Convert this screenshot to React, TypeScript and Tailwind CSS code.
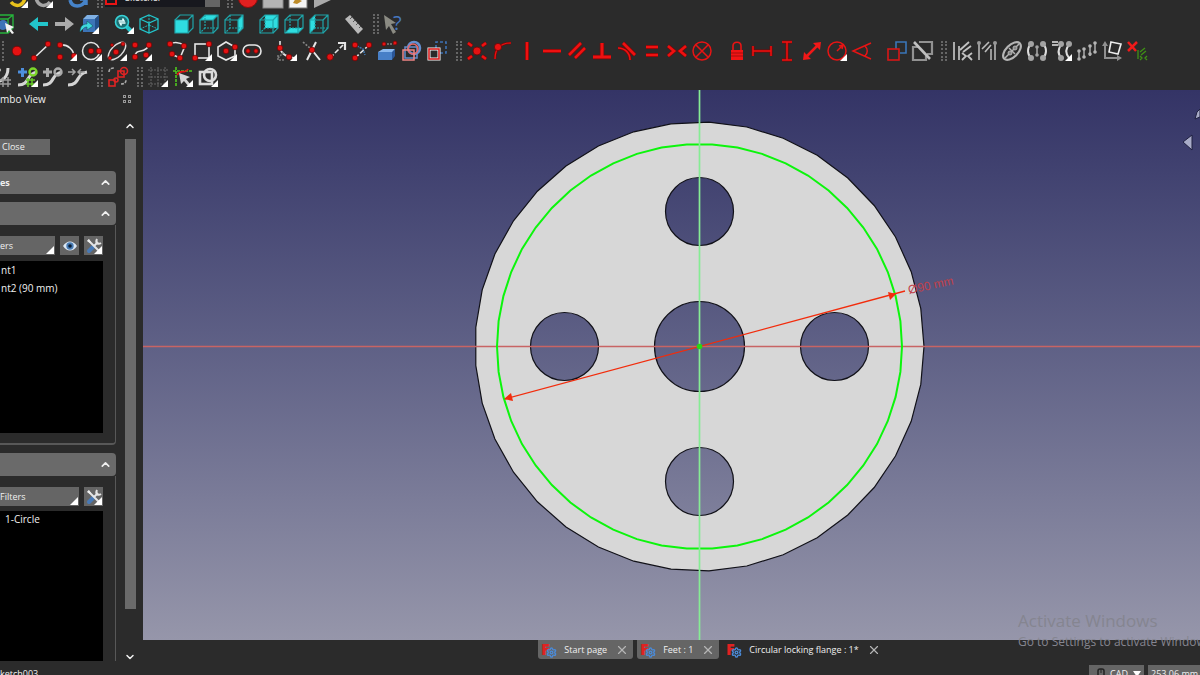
import React, { useState } from 'react'
import { ChevronDown, ChevronUp, Settings, X } from 'lucide-react'

interface Tool {
  label: string
  icon: React.ReactNode
  menu?: boolean
}

const RED = '#e81414'
const TEAL = '#22c5cb'

function Dot({ x, y, r = 2.8 }: { x: number; y: number; r?: number }) {
  return <circle cx={x} cy={y} r={r} fill="#e51212" stroke="#6d0505" strokeWidth="0.8" />
}

function Line({ d, color = '#e6e6e6', width = 1.6, dash }: { d: string; color?: string; width?: number; dash?: string }) {
  return <path d={d} fill="none" stroke={color} strokeWidth={width} strokeDasharray={dash} />
}

// Red constraint stroke with a dark outline
function Bar({ d, width = 2.6 }: { d: string; width?: number }) {
  return (
    <g fill="none">
      <path d={d} stroke="#7a0606" strokeWidth={width + 1.4} />
      <path d={d} stroke="#ee1111" strokeWidth={width} />
    </g>
  )
}

const faces = {
  front: '1,6 14,6 14,19 1,19',
  top: '1,6 6,1 19,1 14,6',
  right: '14,6 19,1 19,14 14,19',
  rear: '6,1 19,1 19,14 6,14',
  bottom: '1,19 6,14 19,14 14,19',
  left: '1,6 6,1 6,14 1,19'
}

function CubeView({ face }: { face: keyof typeof faces }) {
  return (
    <g>
      <polygon points={faces[face]} fill="#2fdde0" />
      <g fill="none" stroke="#1fa5aa" strokeWidth="1.2">
        <polygon points={faces.front} />
        <path d="M1 6 6 1H19V14L14 19M14 6 19 1" />
        {face !== 'front' && <path d="M6 1V14H19M6 14 1 19" strokeDasharray="2 1" />}
      </g>
    </g>
  )
}

function Curve({ plus, color }: { plus?: boolean; color?: string }) {
  return (
    <g>
      <Line d="M0 18C13 18 7 7 19 5" width={3.2} color="#d4d4d4" />
      {plus && <Line d="M0 5H9M4.500 1V10" width={3} color={color || '#aaa'} />}
      {plus && <circle cx="15" cy="5" r="3.5" fill="none" stroke={color ? '#7cd62a' : '#aaa'} strokeWidth="2.4" />}
    </g>
  )
}

// Isometric cube with its hidden edges
function Cube() {
  return (
    <g fill="none" stroke={TEAL} strokeWidth="1.3">
      <path d="M10 1 19 5V15L10 19 1 15V5ZM1 5 10 9 19 5M10 9V19" />
      <path d="M10 1V11L1 15M10 11 19 15" strokeWidth="0.9" strokeDasharray="2 1" />
    </g>
  )
}

const fileTools: Tool[] = [
  { label: 'Undo', menu: true, icon: <Line d="M3 14C8 20 16 18 17 9" color="#e8c21c" width={3.5} /> },
  { label: 'Redo', menu: true, icon: <Line d="M17 14C12 20 4 18 3 9" color="#a5a5a5" width={3.5} /> }
]

const macroTools: Tool[] = [
  { label: 'Record macro', icon: <circle cx="10" cy="10" r="9.5" fill="#e22020" stroke="#8e0c0c" /> },
  { label: 'Stop macro', icon: <rect x="0" y="0" width="20" height="20" fill="#b4b4b4" stroke="#888" /> },
  {
    label: 'Macros',
    icon: (
      <g>
        <rect x="1" y="0" width="18" height="20" fill="#f4f4f4" stroke="#777" />
        <path d="M5 15 8 10 14 13 9 16Z" fill="#bd8b28" />
      </g>
    )
  },
  { label: 'Execute macro', icon: <path d="M1 0 20 11 1 20Z" fill="#aaa" /> }
]

const viewTools: Tool[][] = [
  [
    {
      label: 'Fit selection',
      icon: (
        <g>
          <path d="M1 5 6 1H19V14L14 19H1Z M1 5H14V19M14 5 19 1" fill="none" stroke="#27b43c" strokeWidth="1.4" />
          <circle cx="9" cy="11" r="5" fill="#3c73b8" />
          <path d="M11 9 20 13 17 15 20 19 18 20 15 16 13 19Z" fill="#f2f2f2" />
        </g>
      )
    }
  ],
  [
    { label: 'Back', icon: <path d="M0 10 9 3V8H19V12H9V17Z" fill={TEAL} /> },
    { label: 'Forward', icon: <path d="M20 10 11 3V8H1V12H11V17Z" fill="#ababab" /> },
    {
      label: 'Go to linked object',
      menu: true,
      icon: (
        <g>
          <path d="M4 5 8 1H20L16 5Z" fill="#7fb0e4" />
          <path d="M4 5H16V18H4Z" fill="#3c74b8" />
          <path d="M16 5 20 1V14L16 18Z" fill="#24508c" />
          <path d="M1 18C1 12 4 10 8 10V7L14 12 8 16V13C5 13 4 15 1 18Z" fill="#3fd8dd" stroke="#0f5b60" strokeWidth="0.6" />
        </g>
      )
    }
  ],
  [
    {
      label: 'Fit all',
      menu: true,
      icon: (
        <g>
          <path d="M12 12 18 18" stroke={TEAL} strokeWidth="4" />
          <circle cx="8" cy="8" r="6.5" fill="#1d6f73" stroke="#38d2d7" strokeWidth="1.6" />
          <path d="M4.500 7H10L8.500 4.500M11.500 9H6L7.500 11.500" fill="none" stroke="#e5ffff" strokeWidth="1.5" />
        </g>
      )
    },
    { label: 'Isometric', icon: <Cube /> }
  ],
  [
    { label: 'Front view', icon: <CubeView face="front" /> },
    { label: 'Top view', icon: <CubeView face="top" /> },
    { label: 'Right view', icon: <CubeView face="right" /> }
  ],
  [
    { label: 'Rear view', icon: <CubeView face="rear" /> },
    { label: 'Bottom view', icon: <CubeView face="bottom" /> },
    { label: 'Left view', icon: <CubeView face="left" /> }
  ],
  [
    {
      label: 'Measure',
      icon: (
        <g>
          <path d="M1 5 6 1 19 15 14 20Z" fill="#b9b9b9" />
          <path d="M8 3 6 5M11 6 9 8M14 9 12 11M17 12 15 14" stroke="#555" strokeWidth="1" />
        </g>
      )
    }
  ]
]

const geometryTools: Tool[][] = [
  [
    { label: 'Point', icon: <Dot x={10} y={10} r={4.8} /> },
    { label: 'Line', icon: <g><Line d="M2 17 17 3" /><Dot x={2} y={17} /><Dot x={16} y={3} /></g> },
    { label: 'Arc', menu: true, icon: <g><Line d="M3 4C11 3 17 9 17 16" /><Dot x={3} y={4} /><Dot x={3} y={16} /><Dot x={17} y={15} /></g> },
    { label: 'Circle', menu: true, icon: <g><circle cx="9" cy="10" r="8.5" fill="none" stroke="#e6e6e6" strokeWidth="1.5" /><Dot x={9} y={10} /><Dot x={17} y={10} /></g> },
    {
      label: 'Ellipse',
      menu: true,
      icon: (
        <g>
          <ellipse cx="10" cy="10" rx="11" ry="5.5" transform="rotate(-45 10 10)" fill="none" stroke="#ddd" strokeWidth="1.4" />
          <Dot x={9} y={11} /><Dot x={16} y={3} r={2} /><Dot x={5} y={4} r={1.5} /><Dot x={3} y={17} r={1.8} />
        </g>
      )
    },
    { label: 'B-spline', menu: true, icon: <g><Line d="M3 16C3 6 13 14 17 4" /><Dot x={3} y={4} /><Dot x={3} y={16} /><Dot x={17} y={4} /><Dot x={14} y={14} /></g> }
  ],
  [
    { label: 'Polyline', icon: <g><Line d="M3 3C9 0 14 2 18 5L13 17 4 13" /><Dot x={3} y={3} /><Dot x={17} y={5} /><Dot x={5} y={13} /><Dot x={13} y={17} /></g> },
    { label: 'Rectangle', menu: true, icon: <g><rect x="3" y="3" width="14" height="14" fill="none" stroke="#e6e6e6" strokeWidth="1.6" /><Dot x={17} y={3} /><Dot x={3} y={17} /></g> },
    { label: 'Polygon', menu: true, icon: <g><path d="M9 1 18 6V15L9 19 1 15V6Z" fill="none" stroke="#e6e6e6" strokeWidth="1.6" /><Dot x={9} y={10} /><Dot x={18} y={6} /></g> },
    { label: 'Slot', icon: <g><rect x="1" y="4" width="18" height="12" rx="6" fill="none" stroke="#e6e6e6" strokeWidth="1.6" /><Dot x={6} y={10} r={2.2} /><Dot x={14} y={10} r={2.2} /></g> }
  ],
  [
    { label: 'Fillet', menu: true, icon: <g><Line d="M3 0V7C4 12 9 16 18 17" /><Line d="M1 17 7 11M1 14V19H8" color="#777" dash="2 1" /><Dot x={3} y={7} /><Dot x={12} y={16} /></g> },
    { label: 'Trim', icon: <g><Line d="M14 1 5 19M10 9 18 19" width={2} /><Line d="M1 1 9 8" color="#888" dash="2 1.500" /><Dot x={10} y={9} /></g> },
    { label: 'Extend', icon: <g><Line d="M3 17 16 4" dash="5 2" /><Line d="M11 2H18V9" width={2.2} /><Dot x={3} y={16} r={3.2} /></g> },
    { label: 'Split', icon: <g><Line d="M3 17 17 4" dash="5 2" /><Line d="M5 5 11 8 13 14" color="#3e75ae" dash="2 1" /><Dot x={3} y={4} /><Dot x={17} y={4} /><Dot x={3} y={17} /></g> },
    {
      label: 'External geometry',
      icon: (
        <g>
          <path d="M1 11 6 8H18L16 11Z" fill="#8bb9ee" />
          <path d="M1 11H15V19H1Z" fill="#477fc7" />
          <path d="M15 11 18 8V15L15 19Z" fill="#2a5698" />
          <Line d="M7 3H19" color="#aaa" width={1} dash="2 1" /><Dot x={7} y={3} r={2} /><Dot x={18} y={2} r={2} />
        </g>
      )
    },
    {
      label: 'Carbon copy',
      icon: (
        <g fill="none" strokeWidth="1.5">
          <circle cx="12" cy="7" r="6" stroke="#648fd0" strokeWidth="2.5" />
          <rect x="3" y="6" width="12" height="11" stroke="#648fd0" />
          <circle cx="11" cy="8" r="5" stroke="#e86666" />
          <rect x="1" y="9" width="11" height="10" stroke="#f08585" />
        </g>
      )
    },
    {
      label: 'Toggle construction',
      icon: (
        <g fill="none">
          <path d="M9 7V1H19V12H13" stroke="#3e72b4" strokeWidth="1.6" strokeDasharray="3 2" />
          <rect x="2" y="8" width="10" height="10" stroke="#fff" strokeWidth="3" />
          <rect x="2" y="8" width="10" height="10" stroke="#d92020" strokeWidth="1.6" />
        </g>
      )
    }
  ]
]

const constraintTools: Tool[][] = [
  [
    { label: 'Coincident', icon: <g><Bar d="M1 2 5 5M19 2 15 5M1 18 5 15M19 18 15 15" /><Dot x={10} y={10} r={4} /></g> },
    { label: 'Point on object', icon: <g><Bar d="M3 18C3 8 8 2 19 2" width={1.2} /><Dot x={6} y={6} r={3.6} /></g> },
    { label: 'Vertical', icon: <Bar d="M10 1V19" /> },
    { label: 'Horizontal', icon: <Bar d="M1 10H19" /> },
    { label: 'Parallel', icon: <Bar d="M2 14 14 2M8 17 18 7" /> },
    { label: 'Perpendicular', icon: <Bar d="M10 2V16M1 16H19" width={3} /> },
    { label: 'Tangent', icon: <g><Bar d="M6 2 18 14" /><Bar d="M1 7C8 7 13 12 13 19" width={1.6} /></g> },
    { label: 'Equal', icon: <Bar d="M4 6H16M4 14H16" /> },
    { label: 'Symmetric', icon: <Bar d="M1 5 7 10 1 15M19 5 13 10 19 15" /> },
    { label: 'Block', icon: <g fill="none" stroke={RED} strokeWidth="1.5"><circle cx="10" cy="10" r="9" /><path d="M4 4 16 16M16 4 4 16" /></g> }
  ],
  [
    { label: 'Lock', icon: <g><path d="M6 10V5C6 0 14 0 14 5V10" fill="none" stroke={RED} strokeWidth="1.6" /><path d="M4 9H16V19H4Z" fill="#f01414" /><path d="M4 12H16M4 15H16" stroke="#a70d0d" /></g> },
    { label: 'Horizontal distance', icon: <Bar d="M1 5V15M19 5V15M1 10H19" width={1.5} /> },
    { label: 'Vertical distance', icon: <Bar d="M5 1H15M5 19H15M10 1V19" width={1.5} /> },
    { label: 'Distance', icon: <g fill="#f01818"><path d="M5 15 15 5" stroke="#f01818" strokeWidth="2.5" /><path d="M19 1 18 9 11 2ZM1 19 2 11 9 18Z" /></g> },
    { label: 'Radius', menu: true, icon: <g fill="none" stroke={RED} strokeWidth="1.5"><circle cx="10" cy="10" r="9" /><path d="M10 10 16 4M15 8 16 4 12 5" /></g> },
    { label: 'Angle', icon: <g fill="none" stroke={RED} strokeWidth="1.5"><path d="M19 2 1 10 19 18M13 5C16 8 16 12 13 15" /></g> }
  ],
  [
    { label: 'Toggle driving', icon: <g fill="none" strokeWidth="1.6"><path d="M9 8V1H19V12H13" stroke="#3a76b8" /><rect x="1" y="8" width="11" height="11" stroke="#d81717" /></g> },
    { label: 'Toggle active', icon: <g fill="none" stroke="#929292" strokeWidth="2.2"><path d="M7 1H20V13H15M6 6H1V19H14V15" /><path d="M2 1 18 18" stroke="#c0c0c0" strokeWidth="2.6" /></g> }
  ]
]

const inspectTools: Tool[] = [
  { label: 'Select constraints', icon: <g><Line d="M2 1V19M7 5V19" color="#aaa" width={2} /><Line d="M8 9 17 1M11 11 19 5M10 12 14 15 10 19M20 12 16 15 20 19" color="#c2c2c2" width={1.8} /></g> },
  { label: 'Select elements', icon: <g><Line d="M2 1V19M18 1V19M14 8V19" color="#999" width={2} /><Line d="M5 8 12 1M8 11 14 4" color="#bbb" /><circle cx="2" cy="2" r="2" fill="#999" /><circle cx="18" cy="2" r="2" fill="#999" /></g> },
  { label: 'Show internal geometry', icon: <g fill="none" stroke="#b5b5b5"><ellipse cx="10" cy="10" rx="11" ry="6" transform="rotate(-45 10 10)" strokeWidth="2.2" /><path d="M3 17 17 3M7 7 13 13" strokeWidth="1.5" /><circle cx="8" cy="12" r="2" fill="#888" /><circle cx="13" cy="7" r="2" fill="#888" /></g> },
  { label: 'Symmetry', icon: <g fill="#a2a2a2"><Line d="M4 3C0 7 0 13 4 17M16 3C20 7 20 13 16 17" width={2} color="#ddd" /><Line d="M10 5V15" color="#a2a2a2" /><circle cx="4" cy="3" r="3" /><circle cx="16" cy="3" r="3" /><circle cx="4" cy="17" r="3" /><circle cx="16" cy="17" r="3" /><circle cx="10" cy="6" r="1.8" /><circle cx="10" cy="14" r="1.8" /></g> },
  { label: 'Clone', menu: true, icon: <g fill="#a2a2a2"><Line d="M0 1H6M0 4H6" /><Line d="M9 4C6 8 6 13 9 17M17 4C13 8 14 13 17 17" width={2} color="#ddd" /><circle cx="9" cy="3" r="3" /><circle cx="17" cy="3" r="3" /><circle cx="9" cy="17" r="3" /></g> },
  { label: 'Rectangular array', icon: <g fill="#b5b5b5"><Line d="M2 9V19M7 7V17M13 4V15M18 2V12" color="#a5a5a5" /><circle cx="2" cy="10" r="1.8" /><circle cx="2" cy="18" r="1.8" /><circle cx="7" cy="8" r="1.8" /><circle cx="7" cy="16" r="1.8" /><circle cx="13" cy="5" r="1.8" /><circle cx="13" cy="13" r="1.8" /><circle cx="18" cy="2" r="1.8" /><circle cx="18" cy="11" r="1.8" /></g> },
  { label: 'Remove axes alignment', icon: <g><Line d="M3 2V17H18" color="#909090" width={2} /><path d="M0 5 3 0 6 5ZM15 14 20 17 15 20Z" fill="#909090" /><path d="M9 1 19 3 16 13 7 11Z" fill="none" stroke="#ededed" strokeWidth="1.6" /></g> },
  { label: 'Delete all constraints', icon: <g><Line d="M1 1 9 10M10 1 1 10" color="#f01a1a" width={2.5} /><Line d="M11 9V18M13 11 18 7M14 14 19 10M13 15 15 17 13 19M20 15 18 17 20 19" color="#3f9215" width={1.3} /></g> }
]

const splineTools: Tool[] = [
  { label: 'Decrease degree', icon: <g><Line d="M0 15C8 15 15 11 15 1" width={3} color="#d4d4d4" /><Line d="M0 3H8" color="#aaa" width={2.5} /><Line d="M7 13H18M7 17H18M10 10V20M15 10V20" color="#999" width={1.5} /></g> },
  { label: 'Increase knot multiplicity', menu: true, icon: <g><Curve plus color="#4d8edb" /><Line d="M8 13H17M8 17H17M10 11V20M14 11V20" color="#66c925" width={1.5} /></g> },
  { label: 'Insert knot', icon: <Curve plus /> },
  { label: 'Join curves', icon: <g><Curve /><Line d="M0 5H7M4 2 7 5 4 8M17 5H10M13 2 10 5 13 8" color="#a5a5a5" width={1.5} /></g> }
]

const virtualSpaceTools: Tool[] = [
  { label: 'Switch virtual space', icon: <g fill="none" stroke="#df2424" strokeWidth="1.6"><rect x="1" y="13" width="6" height="6" /><rect x="10" y="4" width="6" height="6" /><circle cx="16" cy="4" r="3.5" /><circle cx="8" cy="13" r="2" /><path d="M1 5C1 2 3 1 6 1M13 17C17 17 18 15 18 13" stroke="#a9a9a9" strokeDasharray="3 1" /></g> }
]

const editTools: Tool[] = [
  { label: 'Grid', menu: true, icon: <Line d="M3 0V20M10 0V20M17 0V20M0 3H20M0 10H20M0 17H20" color="#666" width={1} dash="2 1" /> },
  { label: 'Snap', menu: true, icon: <g><Line d="M0 4H20M3 0V20" color="#50c91e" dash="3 1" /><Line d="M4 8C8 1 12 8 15 2" color={RED} /><path d="M6 6 17 10 13 12 18 18 16 20 11 14 8 17Z" fill="#d5d5d5" /></g> },
  { label: 'Rendering order', menu: true, icon: <g fill="none" stroke="#dcdcdc" strokeWidth="2.6"><rect x="2" y="5" width="12" height="12" /><circle cx="12" cy="8" r="6" /></g> }
]

function ToolButton({ tool }: { tool: Tool }) {
  return (
    <button type="button" aria-label={tool.label} className="flex h-[26px] w-[25px] shrink-0 items-center justify-center hover:bg-[#404040]">
      <svg viewBox="0 0 20 20" className="h-5 w-5 overflow-visible" aria-hidden="true">
        {tool.icon}
        {tool.menu && <path d="M20 13V20H13Z" fill="#fff" />}
      </svg>
    </button>
  )
}

function ToolGroups({ groups }: { groups: Tool[][] }) {
  return (
    <div className="flex gap-[10px]">
      {groups.map((group, i) => (
        <div key={i} className="flex">
          {group.map((tool) => (
            <ToolButton key={tool.label} tool={tool} />
          ))}
        </div>
      ))}
    </div>
  )
}

function Grip() {
  return <div className="ml-[7px] mr-[2px] h-5 w-[6px] shrink-0 border-x-2 border-dotted border-[#666]" />
}

function PanelHeader({ title, label, open, onClick }: { title?: string; label: string; open: boolean; onClick: () => void }) {
  return (
    <button type="button" aria-label={label} onClick={onClick} className="flex h-[23px] w-full shrink-0 items-center justify-between rounded-r-sm bg-[#6a6a6a] pr-1">
      <span className="whitespace-nowrap text-[9px] font-bold">{title}</span>
      {open ? <ChevronUp size={13} strokeWidth={3} /> : <ChevronDown size={13} strokeWidth={3} />}
    </button>
  )
}

function FilterButton({ className, text }: { className: string; text: string }) {
  return (
    <button type="button" aria-label="Filters" className={'relative flex h-[19px] items-center bg-[#656565] text-[9px] ' + className}>
      {text}
      <Corner />
    </button>
  )
}

function Corner() {
  return (
    <svg viewBox="0 0 8 8" className="absolute bottom-px right-px h-2 w-2" aria-hidden="true">
      <path d="M8 0V8H0Z" fill="#fff" />
    </svg>
  )
}

function SettingsButton() {
  return (
    <button type="button" aria-label="Settings" className="relative flex h-[19px] w-[19px] items-center justify-center bg-[#656565]">
      <svg viewBox="0 0 16 16" className="h-4 w-4" aria-hidden="true">
        <path d="M3 13 8 8" stroke="#4879b5" strokeWidth="4" strokeLinecap="round" />
        <path d="M2 2 13 13M8 8 12 4" stroke="#e5e5e5" strokeWidth="2" />
        <path d="M11 1C9 5 12 7 15 5" fill="none" stroke="#e5e5e5" strokeWidth="2" />
        <path d="M1 3 3 1 5 4 4 5Z" fill="#eee" />
      </svg>
      <Corner />
    </button>
  )
}

function Sidebar() {
  const [messagesOpen, setMessagesOpen] = useState(true)
  const [constraintsOpen, setConstraintsOpen] = useState(true)
  const [elementsOpen, setElementsOpen] = useState(true)

  return (
    <aside className="flex w-[143px] shrink-0 flex-col">
      <div className="flex h-[18px] shrink-0 items-center justify-between pr-3">
        <h2 className="whitespace-nowrap text-[10px]">mbo View</h2>
        <button type="button" aria-label="Float panel" className="grid grid-cols-2 gap-[2px]">
          <span className="h-[3px] w-[3px] border border-[#999]" />
          <span className="h-[3px] w-[3px] border border-[#999]" />
          <span className="h-[3px] w-[3px] border border-[#999]" />
          <span className="h-[3px] w-[3px] border border-[#999]" />
        </button>
      </div>

      <div className="flex min-h-0 flex-1 pt-3">
        <div className="flex min-h-0 w-[116px] flex-col">
          <button type="button" className="mt-[19px] flex h-4 w-[50px] shrink-0 items-center bg-[#656565] pl-[2px] text-[9px]">
            Close
          </button>

          <div className="mt-4 shrink-0">
            <PanelHeader title="es" label="Solver messages" open={messagesOpen} onClick={() => setMessagesOpen(!messagesOpen)} />
          </div>

          {/* Constraints */}
          <div className="mt-2 shrink-0">
            <PanelHeader label="Constraints" open={constraintsOpen} onClick={() => setConstraintsOpen(!constraintsOpen)} />
            {constraintsOpen && (
              <div className="rounded-br-sm border-b-2 border-r border-[#585858] pb-[10px] pr-3 pt-[11px]">
                <div className="flex justify-between">
                  <FilterButton className="w-[55px]" text="ers" />
                  <button type="button" aria-label="Show constraints" className="flex h-[19px] w-[19px] items-center justify-center bg-[#656565]">
                    <svg viewBox="0 0 14 10" className="h-[10px] w-[14px]" aria-hidden="true">
                      <path d="M0 5C4 -1 10 -1 14 5C10 11 4 11 0 5Z" fill="#dce8f5" />
                      <circle cx="7" cy="5" r="3.7" fill="#477bb4" />
                      <circle cx="7" cy="5" r="1.8" fill="#0a1d35" />
                    </svg>
                  </button>
                  <SettingsButton />
                </div>
                <ul className="mt-[6px] h-[172px] bg-black text-[10px] leading-[18px]">
                  <li className="pl-px">nt1</li>
                  <li className="pl-px">nt2 (90 mm)</li>
                </ul>
              </div>
            )}
          </div>

          {/* Elements */}
          <div className="mt-2 flex min-h-0 flex-1 flex-col">
            <PanelHeader label="Elements" open={elementsOpen} onClick={() => setElementsOpen(!elementsOpen)} />
            {elementsOpen && (
              <div className="flex min-h-0 flex-1 flex-col border-r border-[#585858] pr-3 pt-[11px]">
                <div className="flex shrink-0 justify-between">
                  <FilterButton className="w-[79px]" text="Filters" />
                  <SettingsButton />
                </div>
                <ul className="mt-[5px] min-h-0 flex-1 bg-black text-[10px] leading-4">
                  <li className="pl-[5px]">1-Circle</li>
                </ul>
              </div>
            )}
          </div>
        </div>

        {/* Scroll bar */}
        <div className="ml-2 flex w-3 flex-col items-center">
          <ChevronUp size={12} strokeWidth={3} className="shrink-0" />
          <div className="mb-[42px] mt-[7px] w-[11px] flex-1 bg-[#6a6a6a]" />
          <ChevronDown size={12} strokeWidth={3} className="-mb-[2px] shrink-0" />
        </div>
      </div>
    </aside>
  )
}

function facets(radius: number, sides: number) {
  const points: string[] = []
  for (let i = 0; i < sides; i++) {
    const angle = (i * 2 * Math.PI) / sides
    points.push((556.5 + radius * Math.cos(angle)).toFixed(1) + ' ' + (256.5 - radius * Math.sin(angle)).toFixed(1))
  }
  return 'M' + points.join('L') + 'Z'
}

function hole(cx: number, cy: number, r: number) {
  return `M${cx - r} ${cy}a${r} ${r} 0 1 0 ${2 * r} 0a${r} ${r} 0 1 0 ${-2 * r} 0Z`
}

function Viewport() {
  const flange = [
    facets(224.5, 37),
    hole(556.5, 256.5, 45),
    hole(556.5, 121.5, 34),
    hole(556.5, 391.5, 34),
    hole(421.5, 256.5, 34),
    hole(691.5, 256.5, 34)
  ].join('')

  return (
    <div className="relative min-h-0 flex-1 overflow-hidden bg-linear-to-b from-[#343466] to-[#9696aa]">
      <svg viewBox="0 0 1057 550" preserveAspectRatio="xMidYMid slice" className="block h-full w-full" role="img" aria-label="Circular locking flange sketch">
        <path d={flange} fill="#d7d7d7" fillRule="evenodd" stroke="#111118" strokeWidth="1.2" />
        <path d="M-1000 256.500H2057" stroke="#c86464" strokeWidth="1.3" />
        <path d={facets(202.5, 50)} fill="none" stroke="#0cf50c" strokeWidth="2" />
        <path d="M556.500 -1000V1550" stroke="#86ec94" strokeWidth="1.7" />
        <path d="M362 309 762 201" stroke="#f22c0c" strokeWidth="1.3" />
        <path d="M361 309 368 303 370 311ZM753 204 745 202 747 210Z" fill="#f22c0c" />
        <circle cx="556.5" cy="256.5" r="2.8" fill="#28d814" />
        <text x="766" y="204" transform="rotate(-12 766 204)" fill="#c0404a" fontSize="12" fontFamily="Liberation Sans, sans-serif">
          Ø90 mm
        </text>
      </svg>
      <svg viewBox="0 0 20 50" className="absolute right-0 top-[14px] h-[50px] w-5" aria-hidden="true">
        <path d="M20 5 17 8 15 15 20 13Z" fill="#a9acc8" stroke="#1f2040" />
        <path d="M3 38 12 31V46Z" fill="#a9acc8" stroke="#1f2040" />
      </svg>
    </div>
  )
}

const tabs = ['Start page', 'Feet : 1', 'Circular locking flange : 1*']

function DocumentTabs() {
  const [active, setActive] = useState(2)

  return (
    <nav className="flex h-[21px] shrink-0 items-start justify-center gap-1 pl-20">
      {tabs.map((tab, i) => (
        <div key={tab} className={'flex h-[19px] items-center rounded-b-[3px] px-1 ' + (i === active ? '' : 'bg-[#656565]')}>
          <button type="button" onClick={() => setActive(i)} className="flex items-center gap-2 whitespace-nowrap text-[9px]">
            <svg viewBox="0 0 14 14" className="h-[14px] w-[14px] overflow-visible" aria-hidden="true">
              <text x="-1" y="12" fill="#e02222" fontSize="16" fontWeight="800" fontFamily="Open Sans, sans-serif">F</text>
              <Settings x={4} y={4} size={11} color="#4b8bd8" strokeWidth={3} />
            </svg>
            {tab}
          </button>
          <button type="button" aria-label={'Close ' + tab} className="ml-2 text-[#b5b5b5]">
            <X size={14} strokeWidth={2} />
          </button>
        </div>
      ))}
    </nav>
  )
}

export default function App() {
  return (
    <div className="relative flex h-screen flex-col overflow-hidden bg-[#2b2b2b] font-['Open_Sans','Noto_Sans',sans-serif] text-[#f0f0f0]">
      <header className="flex h-[90px] shrink-0 flex-col overflow-hidden">
        <div className="-mt-[15px] flex h-[26px] shrink-0 items-center pl-[5px]">
          <ToolGroups groups={[fileTools]} />
          <div className="ml-[10px] flex">
            <ToolButton tool={{ label: 'Refresh', icon: <Line d="M2 12C4 20 14 20 18 12M18 17V11H12" color="#4683c9" width={3.5} /> }} />
          </div>
          <Grip />
          <label className="relative flex h-[18px] w-[115px] shrink-0 items-center bg-[#17181e]">
            <svg viewBox="0 0 12 12" className="absolute left-0 top-1 h-3 w-3" aria-hidden="true">
              <path d="M1 1H11V11H1Z" fill="none" stroke={RED} strokeWidth="2" />
            </svg>
            <select aria-label="Workbench" className="h-full w-[100px] appearance-none bg-transparent pl-5 text-[9px] leading-[18px]">
              <option>Sketcher</option>
              <option>Part Design</option>
            </select>
            <span className="h-full flex-1 bg-[#656565]" />
          </label>
          <Grip />
          <ToolGroups groups={[macroTools]} />
        </div>

        <div className="-ml-[9px] flex h-[26px] shrink-0 items-center">
          <ToolGroups groups={viewTools} />
          <Grip />
          <ToolButton
            tool={{
              label: 'What is this?',
              icon: (
                <g>
                  <path d="M0 1 12 9 7 10 12 18 9 20 5 12 2 16Z" fill="#8b8b83" />
                  <text x="9" y="16" fill="#4777be" fontSize="20" fontFamily="Open Sans, sans-serif">?</text>
                </g>
              )
            }}
          />
        </div>

        <div className="mt-px flex h-[26px] shrink-0 items-center">
          <div className="-ml-[2px] h-5 w-[6px] shrink-0 border-x-2 border-dotted border-[#666]" />
          <ToolGroups groups={geometryTools} />
          <Grip />
          <ToolGroups groups={constraintTools} />
          <Grip />
          <ToolGroups groups={[inspectTools]} />
        </div>

        <div className="-ml-[10px] flex h-[26px] shrink-0 items-center">
          <ToolGroups groups={[splineTools]} />
          <Grip />
          <ToolGroups groups={[virtualSpaceTools]} />
          <Grip />
          <ToolGroups groups={[editTools]} />
        </div>
      </header>

      <div className="flex min-h-0 flex-1">
        <Sidebar />
        <main className="flex min-w-0 flex-1 flex-col">
          <Viewport />
          <DocumentTabs />
        </main>
      </div>

      <footer className="flex h-[14px] shrink-0 items-start justify-between overflow-hidden pt-1 text-[9px]">
        <span className="whitespace-nowrap leading-[18px]">ketch003</span>
        <div className="-mr-3 flex gap-1">
          <button type="button" className="flex h-[18px] w-[55px] items-center justify-end gap-[5px] bg-[#656565] pr-[3px]">
            <svg viewBox="0 0 8 12" className="h-3 w-2" aria-hidden="true">
              <rect x="1" y="1" width="6" height="10" rx="2" fill="none" stroke="#222" strokeWidth="1.5" />
              <path d="M4 1V5" stroke="#222" />
            </svg>
            CAD
            <svg viewBox="0 0 8 6" className="h-[6px] w-2" aria-hidden="true">
              <path d="M0 0H8L4 6Z" fill="#fff" />
            </svg>
          </button>
          <button type="button" className="h-[18px] w-[64px] whitespace-nowrap bg-[#656565] pl-[3px] text-left leading-[18px]">253.06 mm</button>
        </div>
      </footer>

      {/* Activation notice over the window */}
      <div className="pointer-events-none absolute bottom-[24px] left-[1018px] whitespace-nowrap text-[#858590]">
        <p className="text-[17px] leading-6">Activate Windows</p>
        <p className="text-[12px] leading-[18px]">Go to Settings to activate Windows.</p>
      </div>
    </div>
  )
}
